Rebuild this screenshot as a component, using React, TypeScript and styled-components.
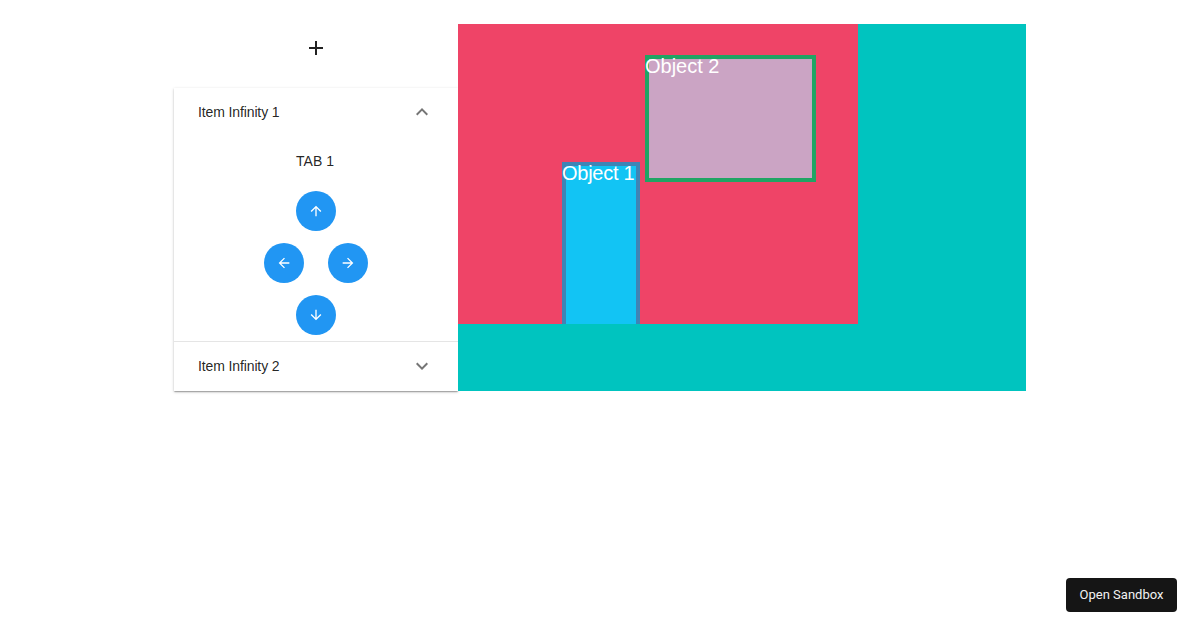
import React from "react";
import styled, { createGlobalStyle } from "styled-components";

const GlobalStyle = createGlobalStyle`
  html, body {
    margin: 0;
    padding: 0;
    background: #fff;
    font-family: "Liberation Sans", Arial, sans-serif;
  }
`;

type Direction = "up" | "down" | "left" | "right";

const arrowTurn: Record<Direction, number> = { up: 0, right: 90, down: 180, left: 270 };

const ArrowIcon = ({ direction }: { direction: Direction }) => (
  <ArrowSvg $turn={arrowTurn[direction]} viewBox="0 0 24 24">
    <path d="M4 12l1.41 1.41L11 7.83V20h2V7.83l5.58 5.59L20 12l-8-8-8 8z" />
  </ArrowSvg>
);

const PlusIcon = () => (
  <svg width="24" height="24" viewBox="0 0 24 24" fill="rgba(0,0,0,0.87)">
    <path d="M19 13h-6v6h-2v-6H5v-2h6V5h2v6h6v2z" />
  </svg>
);

const ChevronIcon = ({ open }: { open?: boolean }) => (
  <ChevronSvg $open={open} viewBox="0 0 24 24">
    <path d="M16.59 8.59L12 13.17 7.41 8.59 6 10l6 6 6-6z" />
  </ChevronSvg>
);

const App: React.FC = () => {
  return (
    <>
      <GlobalStyle />
      <Page>
        <Sidebar>
          <AddButton type="button">
            <PlusIcon />
          </AddButton>
          <Accordion>
            <AccordionHeader>
              <span>Item Infinity 1</span>
              <ChevronIcon open />
            </AccordionHeader>
            <AccordionBody>
              <TabLabel>TAB 1</TabLabel>
              <Pad>
                <PadButton><ArrowIcon direction="up" /></PadButton>
                <PadRow>
                  <PadButton><ArrowIcon direction="left" /></PadButton>
                  <PadButton><ArrowIcon direction="right" /></PadButton>
                </PadRow>
                <PadButton><ArrowIcon direction="down" /></PadButton>
              </Pad>
            </AccordionBody>
            <AccordionHeader $divider>
              <span>Item Infinity 2</span>
              <ChevronIcon />
            </AccordionHeader>
          </Accordion>
        </Sidebar>
        <Stage>
          <Room>
            <ObjectOne>
              <ObjectLabel $tight>Object 1</ObjectLabel>
            </ObjectOne>
            <ObjectTwo>
              <ObjectLabel>Object 2</ObjectLabel>
            </ObjectTwo>
          </Room>
        </Stage>
      </Page>
      <SandboxLink>Open Sandbox</SandboxLink>
    </>
  );
};

export default App;

const Page = styled.div`
  min-height: 100vh;
  box-sizing: border-box;
  display: flex;
  justify-content: center;
  align-items: flex-start;
  padding-top: 24px;
`;

const Sidebar = styled.div`
  width: 284px;
  display: flex;
  flex-direction: column;
  align-items: center;
`;

const AddButton = styled.button`
  width: 48px;
  height: 48px;
  margin-bottom: 16px;
  padding: 0;
  border: 0;
  background: transparent;
  display: flex;
  align-items: center;
  justify-content: center;
`;

const Accordion = styled.div`
  width: 100%;
  height: 303px;
  background: #fff;
  box-shadow: 0 1px 3px 0 rgba(0, 0, 0, 0.2), 0 1px 1px 0 rgba(0, 0, 0, 0.14),
    0 2px 1px -1px rgba(0, 0, 0, 0.12);
`;

const AccordionHeader = styled.div<{ $divider?: boolean }>`
  height: 48px;
  padding: 0 24px;
  display: flex;
  align-items: center;
  justify-content: space-between;
  font-size: 14px;
  letter-spacing: -0.12px;
  color: rgba(0, 0, 0, 0.87);
  border-top: ${(p) => (p.$divider ? "1px solid rgba(0, 0, 0, 0.1)" : "none")};
`;

const ChevronSvg = styled.svg<{ $open?: boolean }>`
  width: 24px;
  height: 24px;
  fill: rgba(0, 0, 0, 0.54);
  transform: ${(p) => (p.$open ? "rotate(180deg)" : "none")};
`;

const AccordionBody = styled.div`
  height: 205px;
  padding-top: 15px;
  box-sizing: border-box;
  display: flex;
  flex-direction: column;
  align-items: center;
`;

const TabLabel = styled.div`
  font-size: 14px;
  line-height: 20px;
  padding-right: 2px;
  color: rgba(0, 0, 0, 0.87);
  margin-bottom: 20px;
`;

const Pad = styled.div`
  display: flex;
  flex-direction: column;
  align-items: center;
  gap: 12px;
`;

const PadRow = styled.div`
  display: flex;
  gap: 24px;
`;

const PadButton = styled.button`
  width: 40px;
  height: 40px;
  padding: 0;
  border: 0;
  border-radius: 50%;
  background: #2196f3;
  display: flex;
  align-items: center;
  justify-content: center;
`;

const ArrowSvg = styled.svg<{ $turn: number }>`
  width: 16px;
  height: 16px;
  fill: #fff;
  transform: rotate(${(p) => p.$turn}deg);
`;

const Stage = styled.div`
  width: 568px;
  height: 367px;
  background: #00c4bf;
`;

const Room = styled.div`
  position: relative;
  width: 400px;
  height: 300px;
  overflow: hidden;
  background: #ef4467;
`;

const ObjectOne = styled.div`
  position: absolute;
  left: 104px;
  top: 138px;
  width: 78px;
  height: 170px;
  box-sizing: border-box;
  border: 4px solid #3f84b5;
  background: #12c4f4;
`;

const ObjectTwo = styled.div`
  position: absolute;
  left: 187px;
  top: 31px;
  width: 171px;
  height: 127px;
  box-sizing: border-box;
  border: 4px solid #20a464;
  background: #cba4c4;
`;

const ObjectLabel = styled.span<{ $tight?: boolean }>`
  position: absolute;
  left: -4px;
  top: -3px;
  color: #fff;
  font-size: 20px;
  line-height: 1;
  white-space: nowrap;
  letter-spacing: ${(p) => (p.$tight ? "-0.25px" : "0")};
`;

const SandboxLink = styled.a`
  position: fixed;
  right: 23px;
  bottom: 18px;
  width: 111px;
  height: 34px;
  padding-bottom: 2px;
  box-sizing: border-box;
  display: flex;
  align-items: center;
  justify-content: center;
  background: #151515;
  border-radius: 4px;
  color: #f2f2f2;
  font-family: Roboto, sans-serif;
  font-size: 13px;
`;
